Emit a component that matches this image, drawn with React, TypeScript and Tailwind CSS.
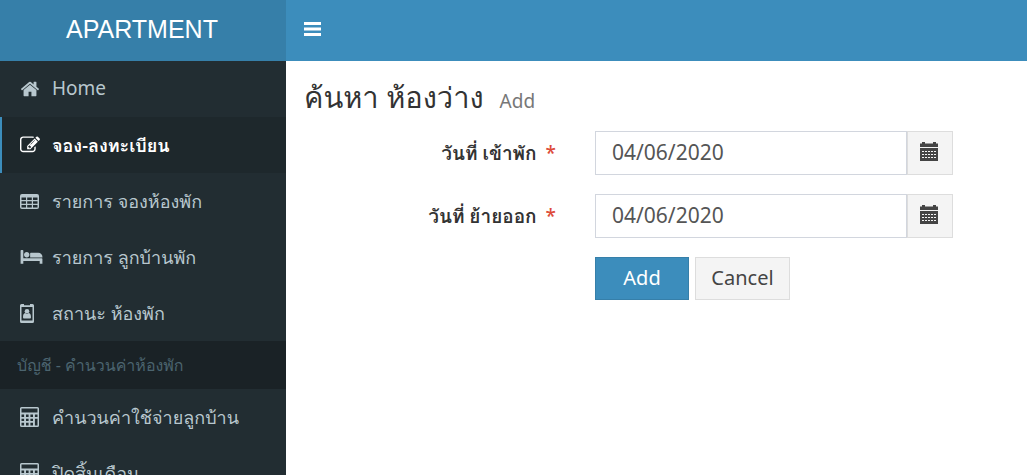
import type { ReactNode } from 'react';

type GlyphProps = { width: number; height: number; viewBox: string; children: ReactNode };

function Glyph({ width, height, viewBox, children }: GlyphProps) {
  return (
    <svg
      aria-hidden="true"
      width={width}
      height={height}
      viewBox={viewBox}
      fill="currentColor"
      className="shrink-0"
    >
      {children}
    </svg>
  );
}

const HomeIcon = () => (
  <Glyph width={20} height={20} viewBox="0 0 1792 1792">
    <path d="M1472 992v480q0 26-19 45t-45 19h-384v-384h-256v384h-384q-26 0-45-19t-19-45v-480q0-1 .5-3t.5-3l575-474 575 474q1 2 1 6zm223-69l-62 74q-8 9-21 11h-3q-13 0-21-7l-692-577-692 577q-12 8-24 7-13-2-21-11l-62-74q-8-10-7-23.5t11-21.5l719-599q32-26 76-26t76 26l244 204v-195q0-14 9-23t23-9h192q14 0 23 9t9 23v408l219 182q10 8 11 21.5t-7 23.5z" />
  </Glyph>
);

const EditIcon = () => (
  <Glyph width={20} height={20} viewBox="0 0 1792 1792">
    <path d="M888 1184l116-116-152-152-116 116v56h96v96h56zm440-720q-16-16-33 1l-350 350q-17 17-1 33t33-1l350-350q17-17 1-33zm80 594v190q0 119-84.5 203.5t-203.5 84.5h-832q-119 0-203.5-84.5t-84.5-203.5v-832q0-119 84.5-203.5t203.5-84.5h832q63 0 117 25 15 7 18 23 3 17-9 29l-49 49q-14 14-32 8-23-6-45-6h-832q-66 0-113 47t-47 113v832q0 66 47 113t113 47h832q66 0 113-47t47-113v-126q0-13 9-22l64-64q15-15 35-7t20 29zm-96-738l288 288-672 672h-288v-288zm444 132l-92 92-288-288 92-92q28-28 68-28t68 28l152 152q28 28 28 68t-28 68z" />
  </Glyph>
);

const TableIcon = () => (
  <Glyph width={19} height={15} viewBox="0 0 19 15">
    <path
      fillRule="evenodd"
      d="M2 0h15a2 2 0 0 1 2 2v11a2 2 0 0 1-2 2H2a2 2 0 0 1-2-2V2a2 2 0 0 1 2-2zM1.5 3.5V6H6V3.5zM7.2 3.5V6h4.6V3.5zM13 3.5V6h4.5V3.5zM1.5 7.2v2.5H6V7.2zM7.2 7.2v2.5h4.6V7.2zM13 7.2v2.5h4.5V7.2zM1.5 11v2.5H6V11zM7.2 11v2.5h4.6V11zM13 11v2.5h4.5V11z"
    />
  </Glyph>
);

const BedIcon = () => (
  <Glyph width={23} height={15} viewBox="0 0 2048 1408">
    <path d="M256 768h1728q26 0 45 19t19 45v448h-256v-256H256v256H0V64q0-26 19-45T64 0h128q26 0 45 19t19 45v704zm576-320q0-106-75-181t-181-75-181 75-75 181 75 181 181 75 181-75 75-181zm1216 256v-64q0-159-112.500-271.500T1664 256H960q-26 0-45 19t-19 45v384h1152z" />
  </Glyph>
);

const BadgeIcon = () => (
  <Glyph width={14} height={19} viewBox="0 0 14 19">
    <path
      fillRule="evenodd"
      d="M1.500 0H4v1.200h6V0h2.500A1.500 1.500 0 0 1 14 1.500v16a1.500 1.500 0 0 1-1.500 1.500h-11A1.500 1.500 0 0 1 0 17.500v-16A1.500 1.500 0 0 1 1.500 0zM1.500 3v13.500h11V3z"
    />
    <circle cx="7" cy="7.300" r="2.300" />
    <path d="M3 13.300c0-2.400.8-3.900 2.100-4.200a3 3 0 0 0 3.800 0c1.300.3 2.100 1.800 2.100 4.200 0 .8-.5 1.200-1 1.200H4c-.5 0-1-.4-1-1.200z" />
  </Glyph>
);

const CalculatorIcon = () => (
  <Glyph width={19} height={20} viewBox="0 0 19 20">
    <path
      fillRule="evenodd"
      d="M1.500 0h16A1.500 1.500 0 0 1 19 1.500v17a1.500 1.500 0 0 1-1.500 1.500h-16A1.500 1.500 0 0 1 0 18.500v-17A1.500 1.500 0 0 1 1.500 0zM1.500 1.500v4h16v-4zM1.500 7.600v2.300h2.600V7.600zM6 7.600v2.300h2.600V7.600zM10.400 7.600v2.300H13V7.600zM14.900 7.600v2.300h2.600V7.600zM1.500 11.700V14h2.600v-2.300zM6 11.700V14h2.600v-2.300zM10.400 11.700V14H13v-2.300zM14.900 11.700v6.800h2.600v-6.800zM1.500 15.800v2.700h2.600v-2.700zM6 15.800v2.700h2.600v-2.700zM10.400 15.800v2.700H13v-2.700z"
    />
  </Glyph>
);

const CalendarIcon = () => (
  <Glyph width={18} height={19} viewBox="0 0 18 19">
    <path
      fillRule="evenodd"
      d="M2 0h3v1.500h8V0h3v1.500h2V5H0V1.500h2zM0 6h18v13H0zM2 9v1h2V9zM5 9v1h2V9zM8 9v1h2V9zM11 9v1h2V9zM14 9v1h2V9zM2 12v1h2v-1zM5 12v1h2v-1zM8 12v1h2v-1zM11 12v1h2v-1zM14 12v1h2v-1zM2 15v1h2v-1zM5 15v1h2v-1zM8 15v1h2v-1zM11 15v1h2v-1zM14 15v1h2v-1z"
    />
  </Glyph>
);

const MenuIcon = () => (
  <Glyph width={17} height={14} viewBox="0 0 17 14">
    <path d="M0 0h17v3H0zM0 5.500h17v3H0zM0 11h17v3H0z" />
  </Glyph>
);

function NavItem({ icon, label, active }: { icon: ReactNode; label: ReactNode; active?: boolean }) {
  return (
    <li>
      <a
        href="#"
        aria-current={active ? 'page' : undefined}
        className={
          active
            ? 'flex h-14 items-center border-l-2 border-[#3c8dbc] bg-[#1e282c] pl-[18px] font-semibold text-white'
            : 'flex h-14 items-center border-l-2 border-transparent pl-[18px] text-[#b8c7ce]'
        }
      >
        <span className="flex w-8 shrink-0 items-center">{icon}</span>
        <span className="whitespace-nowrap">{label}</span>
      </a>
    </li>
  );
}

function DateField({ id, label }: { id: string; label: string }) {
  return (
    <div className="flex items-center gap-[39px]">
      <label htmlFor={id} className="w-[252px] shrink-0 text-right text-[19px] font-bold whitespace-nowrap">
        {label} <span className="ml-1 font-medium text-[#dd4b39]">*</span>
      </label>
      <div className="flex h-11">
        <input
          id={id}
          type="text"
          defaultValue="04/06/2020"
          className="w-[312px] border border-[#d2d6de] bg-white px-4 text-[21px] text-[#555555] outline-none"
        />
        <button
          type="button"
          aria-label={`เลือก${label}`}
          className="flex w-[46px] items-center justify-center border border-[#dddddd] bg-[#f4f4f4] pr-0.5 pb-1 text-[#444444]"
        >
          <CalendarIcon />
        </button>
      </div>
    </div>
  );
}

export default function App() {
  return (
    <div className="flex h-screen overflow-hidden bg-white font-['Noto_Sans','Waree','Loma','Noto_Sans_Thai_Looped','Noto_Sans_Thai',sans-serif] text-[#333333]">
      <aside className="w-[286px] shrink-0 bg-[#222d32] text-lg">
        <a
          href="#"
          className="flex h-[61px] items-center justify-center bg-[#367fa9] pr-0.5 pb-0.5 font-['Liberation_Sans',sans-serif] text-[25px] text-white"
        >
          APARTMENT
        </a>
        <nav>
          <ul>
            <NavItem icon={<HomeIcon />} label={<span className="text-[19px]">Home</span>} />
            <NavItem icon={<EditIcon />} label="จอง-ลงทะเบียน" active />
            <NavItem icon={<TableIcon />} label="รายการ จองห้องพัก" />
            <NavItem icon={<BedIcon />} label="รายการ ลูกบ้านพัก" />
            <NavItem icon={<BadgeIcon />} label="สถานะ ห้องพัก" />
            <li className="flex h-12 items-center bg-[#1a2226] pl-[17px] text-base text-[#4b646f]">
              บัญชี - คำนวนค่าห้องพัก
            </li>
            <NavItem icon={<CalculatorIcon />} label="คำนวนค่าใช้จ่ายลูกบ้าน" />
            <NavItem icon={<CalculatorIcon />} label="ปิดสิ้นเดือน" />
          </ul>
        </nav>
      </aside>
      <div className="flex min-w-0 flex-1 flex-col">
        <header className="flex h-[61px] shrink-0 items-center bg-[#3c8dbc] pb-1 pl-[18px] text-white">
          <button type="button" aria-label="เมนู">
            <MenuIcon />
          </button>
        </header>
        <main className="px-[18px] pt-[18px]">
          <h1 className="flex h-9 items-baseline gap-4 text-[29px] leading-9 whitespace-nowrap">
            ค้นหา ห้องว่าง <small className="text-[19px] text-[#777777]">Add</small>
          </h1>
          <form className="flex flex-col gap-[19px] pt-4" onSubmit={(e) => e.preventDefault()}>
            <DateField id="check-in" label="วันที่ เข้าพัก" />
            <DateField id="check-out" label="วันที่ ย้ายออก" />
            <div className="flex gap-[6px] pl-[291px] text-xl">
              <button
                type="submit"
                className="h-[43px] w-[94px] border border-[#367fa9] bg-[#3c8dbc] pb-0.5 text-white"
              >
                Add
              </button>
              <button
                type="button"
                className="h-[43px] w-[95px] border border-[#dddddd] bg-[#f4f4f4] pb-0.5 text-[#444444]"
              >
                Cancel
              </button>
            </div>
          </form>
        </main>
      </div>
    </div>
  );
}
